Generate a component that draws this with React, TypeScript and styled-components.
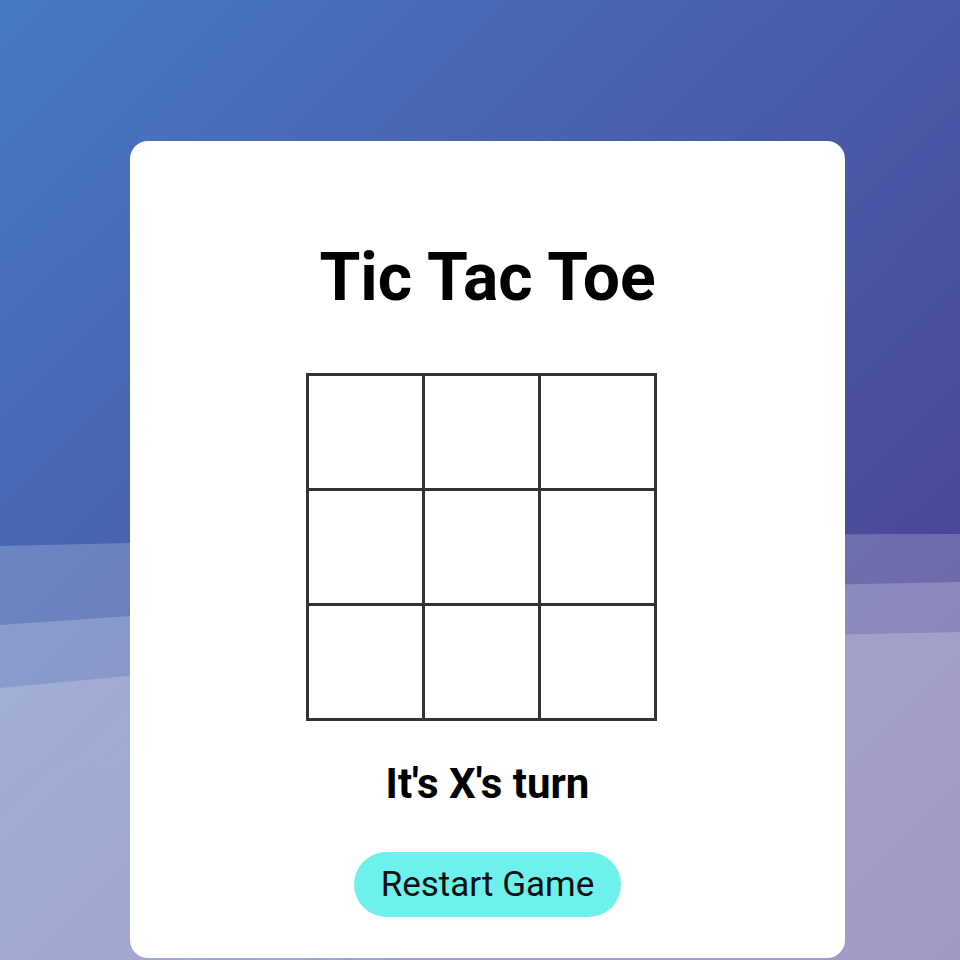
import React, { useState } from 'react';
import styled, { createGlobalStyle } from 'styled-components';

const GlobalStyle = createGlobalStyle`
  html, body {
    margin: 0;
    padding: 0;
  }
  body {
    font-family: Roboto, 'Liberation Sans', sans-serif;
  }
`;

type Cell = 'X' | 'O' | null;

export default function App() {
  const [cells, setCells] = useState<Cell[]>(Array(9).fill(null));
  const [turn, setTurn] = useState<'X' | 'O'>('X');

  const play = (idx: number) => {
    if (cells[idx]) return;
    const next = [...cells];
    next[idx] = turn;
    setCells(next);
    setTurn(turn === 'X' ? 'O' : 'X');
  };

  const restart = () => {
    setCells(Array(9).fill(null));
    setTurn('X');
  };

  return (
    <Page>
      <GlobalStyle />
      <Waves viewBox="0 0 960 960" preserveAspectRatio="none">
        <path d="M0 546 Q480 534 960 534 L960 960 L0 960 Z" />
        <path d="M0 625 Q480 590 960 582 L960 960 L0 960 Z" />
        <path d="M0 688 Q480 640 960 632 L960 960 L0 960 Z" />
      </Waves>
      <Card>
        <Title>Tic Tac Toe</Title>
        <Board>
          {cells.map((c, i) => (
            <Square key={i} onClick={() => play(i)}>
              {c}
            </Square>
          ))}
        </Board>
        <Status>It's {turn}'s turn</Status>
        <RestartButton onClick={restart}>Restart Game</RestartButton>
      </Card>
    </Page>
  );
}

const Page = styled.div`
  position: relative;
  min-height: 960px;
  overflow: hidden;
  background: linear-gradient(135deg, #4779c3 0%, #4b3a8c 100%);
  padding: 141px 0 0 130px;
  box-sizing: border-box;
`;

const Waves = styled.svg`
  position: absolute;
  left: 0;
  top: 0;
  width: 100%;
  height: 960px;
  path {
    fill: rgba(255, 255, 255, 0.2);
  }
`;

const Card = styled.div`
  position: relative;
  width: 715px;
  box-sizing: border-box;
  background: #fff;
  border-radius: 18px;
  padding: 98px 0 41px;
  display: flex;
  flex-direction: column;
  align-items: center;
`;

const Title = styled.h1`
  margin: 0;
  font-size: 66px;
  font-weight: 700;
  color: #000;
  line-height: normal;
`;

const Board = styled.div`
  margin: 57px 12px 0 0;
  display: grid;
  grid-template-columns: repeat(3, 113px);
  grid-template-rows: repeat(3, 112px);
  gap: 3px;
  padding: 3px;
  background: #333;
`;

const Square = styled.button`
  border: none;
  padding: 0;
  background: #fff;
  font-family: Roboto, sans-serif;
  font-size: 64px;
  font-weight: 700;
  color: #222;
  cursor: pointer;
`;

const Status = styled.div`
  margin-top: 38px;
  font-size: 42px;
  font-weight: 700;
  color: #000;
  line-height: normal;
`;

const RestartButton = styled.button`
  margin-top: 44px;
  height: 65px;
  padding: 0 27px;
  border: none;
  border-radius: 33px;
  background: #6ef0ec;
  color: #111;
  font-family: Roboto, sans-serif;
  font-size: 35px;
  font-weight: 400;
  cursor: pointer;
`;
